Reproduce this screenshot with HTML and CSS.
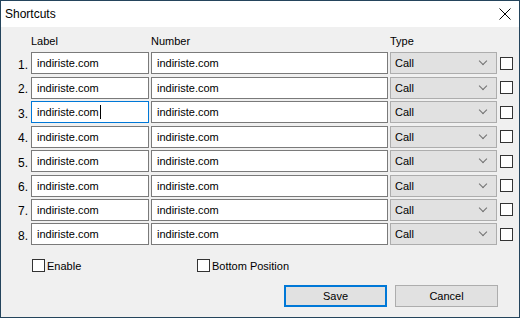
FILE: index.html
```html
<!DOCTYPE html>
<html lang="en">
<head>
    <meta charset="UTF-8">
    <title>Shortcuts</title>
    <link rel="stylesheet" href="styles.css">
</head>
<body>
    <div class="window">
        <div class="titlebar">
            <span class="title">Shortcuts</span>
            <span class="close">
                <svg width="12" height="12" viewBox="0 0 12 12"><path d="M0.5 0.5L11.5 11.5M11.5 0.5L0.5 11.5" stroke="#000" stroke-width="1" fill="none"/></svg>
            </span>
        </div>
        <div class="content">
            <div class="grid">
                <div></div>
                <div class="head">Label</div>
                <div class="head">Number</div>
                <div class="head">Type</div>
                <div></div>

                <div class="num">1.</div>
                <div class="field">indiriste.com</div>
                <div class="field">indiriste.com</div>
                <div class="select">Call<span class="chev"></span></div>
                <div class="check"></div>

                <div class="num">2.</div>
                <div class="field">indiriste.com</div>
                <div class="field">indiriste.com</div>
                <div class="select">Call<span class="chev"></span></div>
                <div class="check"></div>

                <div class="num">3.</div>
                <div class="field focus">indiriste.com<span class="caret"></span></div>
                <div class="field">indiriste.com</div>
                <div class="select">Call<span class="chev"></span></div>
                <div class="check"></div>

                <div class="num">4.</div>
                <div class="field">indiriste.com</div>
                <div class="field">indiriste.com</div>
                <div class="select">Call<span class="chev"></span></div>
                <div class="check"></div>

                <div class="num">5.</div>
                <div class="field">indiriste.com</div>
                <div class="field">indiriste.com</div>
                <div class="select">Call<span class="chev"></span></div>
                <div class="check"></div>

                <div class="num">6.</div>
                <div class="field">indiriste.com</div>
                <div class="field">indiriste.com</div>
                <div class="select">Call<span class="chev"></span></div>
                <div class="check"></div>

                <div class="num">7.</div>
                <div class="field">indiriste.com</div>
                <div class="field">indiriste.com</div>
                <div class="select">Call<span class="chev"></span></div>
                <div class="check"></div>

                <div class="num">8.</div>
                <div class="field">indiriste.com</div>
                <div class="field">indiriste.com</div>
                <div class="select">Call<span class="chev"></span></div>
                <div class="check"></div>
            </div>
            <div class="options">
                <label class="opt enable"><span class="check"></span>Enable</label>
                <label class="opt"><span class="check"></span>Bottom Position</label>
            </div>
            <div class="actions">
                <button class="btn default">Save</button>
                <button class="btn">Cancel</button>
            </div>
        </div>
    </div>
</body>
</html>
```

FILE: styles.css
```css
html, body {
    margin: 0;
    padding: 0;
}
body {
    font-family: "Liberation Sans", Arial, sans-serif;
    font-size: 11px;
    color: #000;
}
.window {
    width: 520px;
    height: 318px;
    box-sizing: border-box;
    border: 1px solid #24445c;
    background-color: #f0f0f0;
    display: flex;
    flex-direction: column;
}
.titlebar {
    height: 25px;
    background-color: #fff;
    display: flex;
    align-items: center;
    justify-content: space-between;
    padding: 0 8px 1px 4px;
    flex-shrink: 0;
}
.title {
    font-size: 12px;
}
.close {
    display: flex;
    width: 12px;
    height: 12px;
}
.content {
    padding: 7px 0 0 0;
}
.grid {
    display: grid;
    grid-template-columns: 28px 118px 237px 107px 13px;
    column-gap: 2px;
    row-gap: 2.43px;
    grid-auto-rows: 22px;
    grid-template-rows: 16px;
    align-items: center;
}
.head {
    align-self: start;
    line-height: 14px;
}
.num {
    text-align: right;
    font-size: 12px;
    padding-top: 3px;
    margin-right: 1px;
}
.field {
    height: 22px;
    box-sizing: border-box;
    border: 1px solid #7a7a7a;
    background-color: #fff;
    padding: 0 5px;
    line-height: 20px;
    display: flex;
    align-items: center;
}
.field.focus {
    border-color: #0078d7;
}
.caret {
    display: inline-block;
    width: 1px;
    height: 14px;
    background-color: #000;
    margin-left: 1px;
}
.select {
    height: 22px;
    box-sizing: border-box;
    border: 1px solid #adadad;
    background-color: #e1e1e1;
    padding: 0 4px;
    display: flex;
    align-items: center;
    justify-content: space-between;
}
.chev {
    width: 5px;
    height: 5px;
    border-right: 1px solid #707070;
    border-bottom: 1px solid #707070;
    transform: rotate(45deg);
    margin: 0 6px 4px 0;
}
.grid .check {
    margin-left: 1px;
}
.check {
    width: 13px;
    height: 13px;
    box-sizing: border-box;
    border: 1px solid #333;
    background-color: #fff;
    align-self: center;
}
.options {
    display: flex;
    padding: 14px 0 0 31px;
}
.opt {
    display: flex;
    align-items: center;
    gap: 2px;
    font-size: 11px;
}
.opt.enable {
    width: 165px;
}
.actions {
    display: flex;
    justify-content: flex-end;
    gap: 8px;
    padding: 13px 21px 0 0;
}
.btn {
    width: 103px;
    height: 22px;
    box-sizing: border-box;
    border: 1px solid #adadad;
    background-color: #e1e1e1;
    font-family: "Liberation Sans", Arial, sans-serif;
    font-size: 11px;
    padding: 0;
}
.btn.default {
    border: 2px solid #0078d7;
}
```
